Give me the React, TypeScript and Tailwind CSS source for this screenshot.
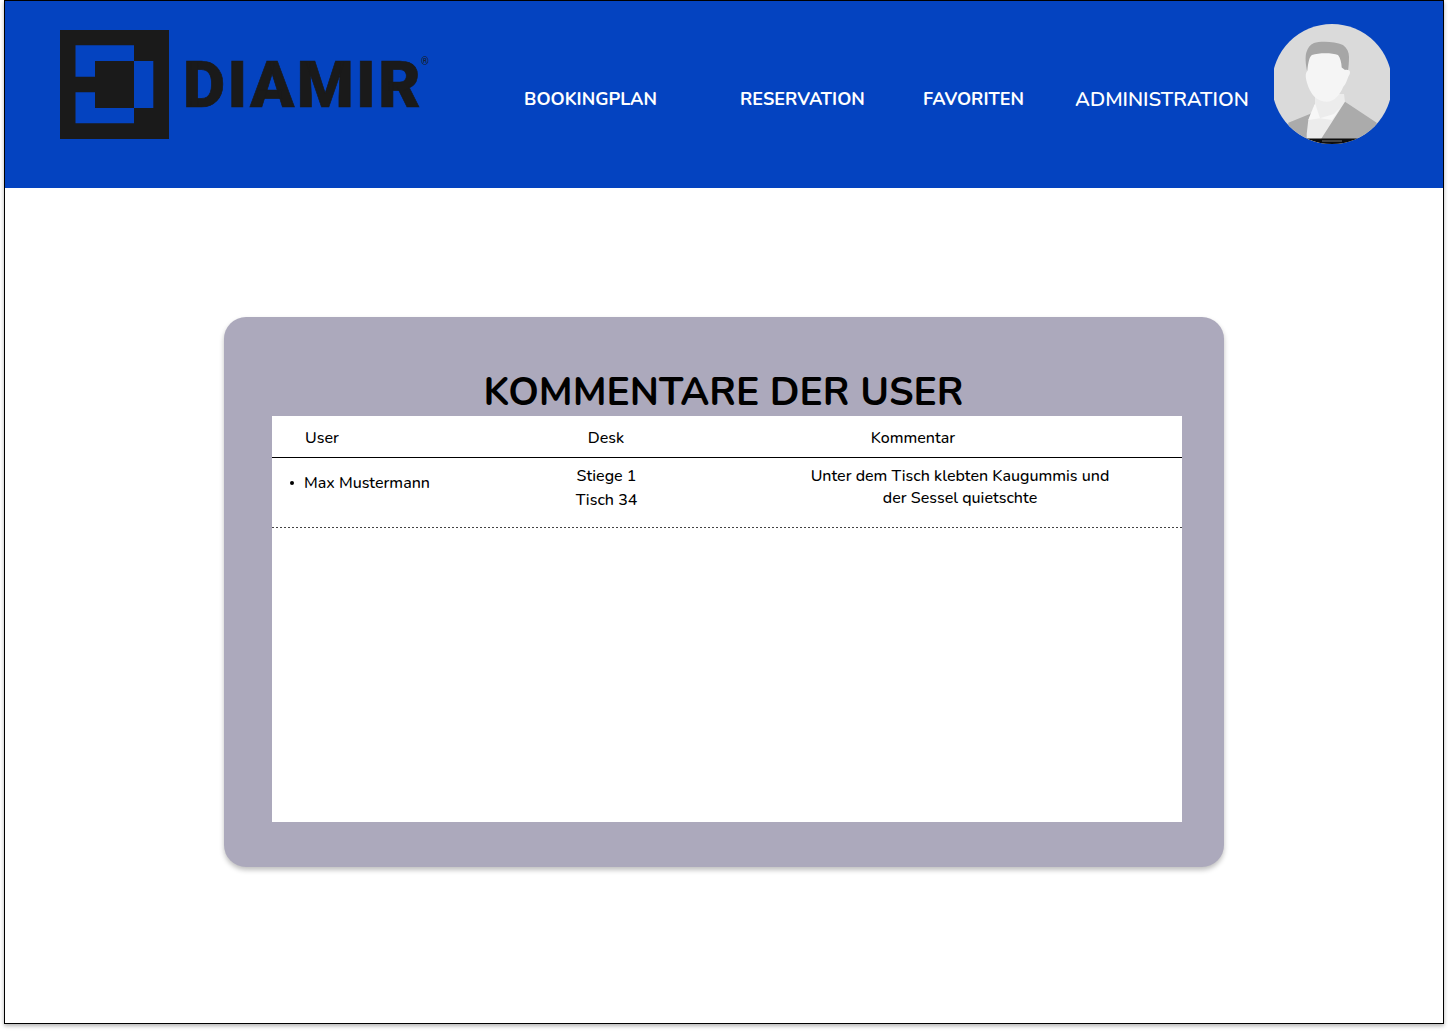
const font = "font-['Nunito','Lato','Noto_Sans',sans-serif]";

function LogoMark() {
  return (
    <svg width="109" height="109" viewBox="60 30 109 109" className="shrink-0">
      <rect x="60" y="30" width="109" height="109" fill="#1a1a1a" />
      <path d="M75.5 45.3H134V61H95V76.7H75.5Z" fill="#0443c0" />
      <path d="M75.5 92.3H95V108H134V123.3H75.5Z" fill="#0443c0" />
      <rect x="134" y="61" width="19.3" height="47" fill="#0443c0" />
    </svg>
  );
}

function Avatar() {
  return (
    <svg width="116" height="120" viewBox="0 0 116 120" className="shrink-0">
      <defs>
        <clipPath id="av">
          <circle cx="58" cy="60" r="60" />
        </clipPath>
      </defs>
      <g clipPath="url(#av)">
        <rect width="116" height="120" fill="#dadada" />
        <path d="M14.3 98.7L37.7 89.3L41 79L71 77.7L102.7 98.7V120H14.3Z" fill="#ababab" />
        <path d="M41 70H70L71 77.7L47.7 114L45 120H32.7V110L34.3 96L41 80Z" fill="#ececec" />
        <path d="M41 79L46 94.3L34.3 96Z" fill="#f7f7f7" />
        <path d="M46 94.3L58 96L66 84L60 90Z" fill="#f7f7f7" />
        <path d="M33.3 48C31.5 40 31 32 32.5 28C34 24 36 20.5 40 19C46 17 60 17 69 21C73 24 75 28 75 33C75 39 74.5 43 74 47L70 50L60 31H38Z" fill="#a6a6a6" />
        <path d="M33.3 47C34 40 35 33 38 31C45 28.5 58 28.5 64 31C66.5 34 67.5 39 67.7 43.5L71 46C73 45.5 76 46 76 48C76 50 75 51.5 74.3 52.7C73 56 72 60 69.3 62.7C66 71 60 77.7 52.7 77.7C46 77.7 40.5 74 37.7 69.3C35 65 33.5 61 32.7 57.7C31.7 54 31 49.5 33.3 47Z" fill="#f5f5f5" />
        <rect x="28" y="114.5" width="60" height="6" fill="#0d0d0d" />
        <rect x="48" y="116.5" width="20" height="1" fill="#777777" />
      </g>
    </svg>
  );
}

export default function App() {
  return (
    <div className={`w-[1448px] h-[1032px] bg-white overflow-hidden ${font}`}>
      <div className="ml-1 w-[1440px] h-[1024px] border border-black shadow-[0_2px_4px_rgba(0,0,0,0.3)] bg-white flex flex-col">
        <header className="h-[187px] shrink-0 bg-[#0443c0] flex items-start text-white font-bold text-[18px] leading-[26px]">
          <div className="ml-[55px] mt-[29px] flex w-[464px]">
            <LogoMark />
            <div className="ml-[14px] mt-[19px] relative text-[#1a1a1a] font-['Roboto',sans-serif] font-black text-[65px] leading-[72px] tracking-[2.4px] [-webkit-text-stroke:0.7px_#1a1a1a]">
              DIAMIR
              <span className="absolute right-[-6px] top-[8px] text-[10px] leading-[10px] font-normal tracking-normal [-webkit-text-stroke:0]">®</span>
            </div>
          </div>
          <nav className="mt-[85px] flex items-center">
            <span className="w-[216px]">BOOKINGPLAN</span>
            <span className="w-[183px]">RESERVATION</span>
            <span className="w-[152px]">FAVORITEN</span>
            <span className="w-[174px] whitespace-nowrap text-[20.3px] font-semibold">ADMINISTRATION</span>
          </nav>
          <div className="ml-[25px] mt-[23px]">
            <Avatar />
          </div>
        </header>
        <main className="ml-[219px] mt-[129px] w-[1000px] h-[550px] rounded-[22px] bg-[#aca9bc] shadow-[0_3px_5px_rgba(0,0,0,0.25)] px-[48px] pt-[52px] text-black">
          <h1 className="w-[903px] text-center text-[39px] leading-[47px] font-bold">KOMMENTARE DER USER</h1>
          <div className="w-[910px] h-[406px] bg-white text-[16px] font-medium">
            <div className="h-[42px] border-b border-black flex items-center leading-[22px]">
              <span className="ml-[33px] w-[266px] relative top-[1px]">User</span>
              <span className="w-[70px] text-center relative top-[1px]">Desk</span>
              <span className="ml-[222px] w-[100px] text-center relative top-[1px]">Kommentar</span>
            </div>
            <div className="h-[69px] flex items-start leading-[22px]">
              <div className="ml-[18px] w-[281px] mt-[14px] h-[22px] flex items-center">
                <span className="w-[4px] h-[4px] rounded-full bg-black mr-[10px]" />
                Max Mustermann
              </div>
              <div className="w-[71px] mt-[6px] text-center leading-[24px]">
                Stiege 1
                <br />
                Tisch 34
              </div>
              <div className="ml-[148px] w-[340px] mt-[7px] text-center">
                Unter dem Tisch klebten Kaugummis und
                <br />
                der Sessel quietschte
              </div>
            </div>
            <div className="h-px bg-[repeating-linear-gradient(90deg,#444444_0_2px,transparent_2px_4px)]" />
          </div>
        </main>
      </div>
    </div>
  );
}
